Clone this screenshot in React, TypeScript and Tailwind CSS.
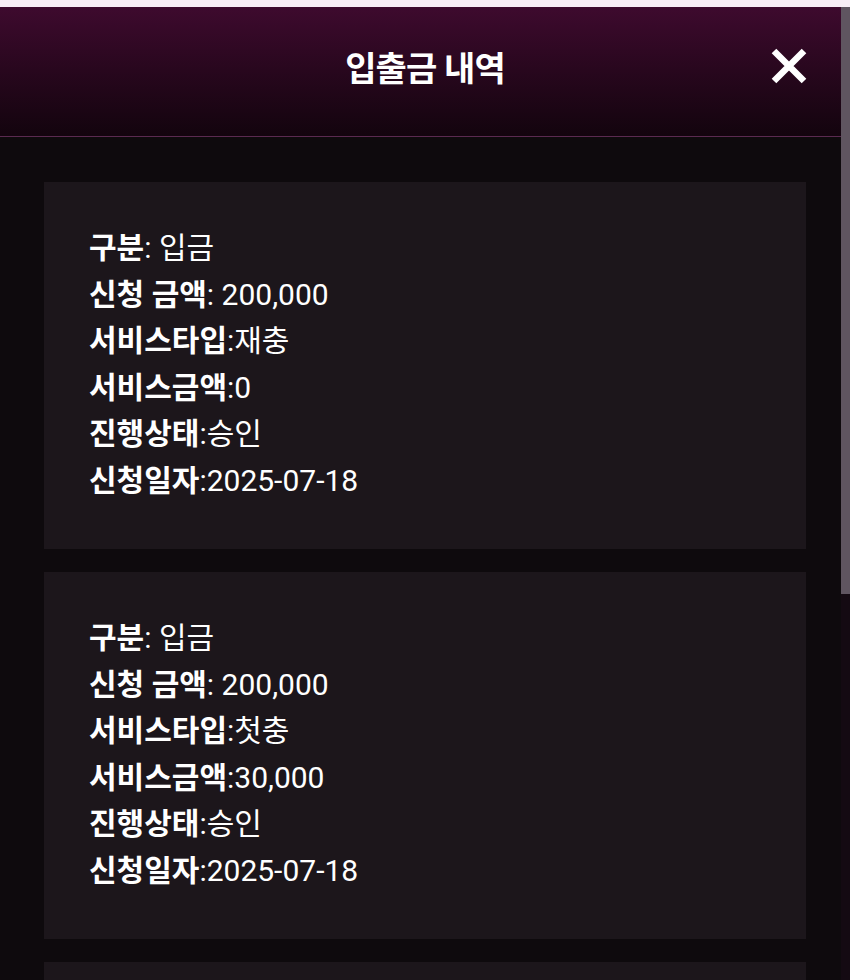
import React from 'react';

type Row = { label: string; value: string };

const records: Row[][] = [
  [
    { label: '구분', value: ': 입금' },
    { label: '신청 금액', value: ': 200,000' },
    { label: '서비스타입', value: ':재충' },
    { label: '서비스금액', value: ':0' },
    { label: '진행상태', value: ':승인' },
    { label: '신청일자', value: ':2025-07-18' },
  ],
  [
    { label: '구분', value: ': 입금' },
    { label: '신청 금액', value: ': 200,000' },
    { label: '서비스타입', value: ':첫충' },
    { label: '서비스금액', value: ':30,000' },
    { label: '진행상태', value: ':승인' },
    { label: '신청일자', value: ':2025-07-18' },
  ],
  [],
];

export default function App() {
  return (
    <div
      className="relative w-[850px] h-[980px] overflow-hidden bg-[#0e0a0d] text-white"
      style={{ fontFamily: 'Roboto, "Noto Sans CJK KR", sans-serif' }}
    >
      <div className="h-[7px] bg-[#f8eef6]"></div>

      <header className="relative h-[130px] flex items-center justify-center border-b border-[#5a2a50] bg-gradient-to-b from-[#3e0a2e] to-[#13040e]">
        <h1 className="text-[34px] font-bold tracking-tight -mt-[5px]">입출금 내역</h1>
        <button className="absolute right-[40px] top-[38px] size-[42px] flex items-center justify-center">
          <svg width="40" height="40" viewBox="0 0 40 40">
            <path d="M5 5 L35 35 M35 5 L5 35" stroke="#ffffff" strokeWidth="6.5" strokeLinecap="butt" />
          </svg>
        </button>
      </header>

      <div className="flex flex-col gap-[23px] px-[44px] pt-[45px]">
        {records.map((rows, i) => (
          <div key={i} className="bg-[#1c161b] pl-[45px] pt-[43px] h-[367px]">
            {rows.map((r) => (
              <div key={r.label} className="text-[30px] leading-[46.6px]">
                <span className="font-bold">{r.label}</span>
                <span className="font-normal">{r.value}</span>
              </div>
            ))}
          </div>
        ))}
      </div>

      {/* scrollbar */}
      <div className="absolute right-0 top-[7px] bottom-0 w-[9px] bg-[#140a12]">
        <div className="h-[587px] bg-[#5f5560]"></div>
      </div>
    </div>
  );
}
